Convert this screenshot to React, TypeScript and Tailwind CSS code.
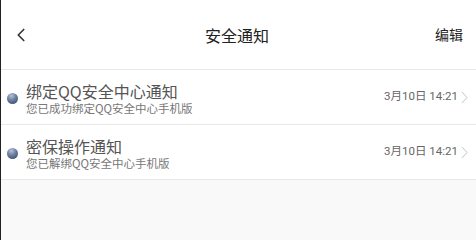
import { ChevronLeft } from "lucide-react";

const FONT = { fontFamily: '"Noto Sans CJK SC", "Noto Sans", Roboto, sans-serif' };

const ITEMS = [
  { title: "绑定QQ安全中心通知", desc: "您已成功绑定QQ安全中心手机版", time: "3月10日 14:21" },
  { title: "密保操作通知", desc: "您已解绑QQ安全中心手机版", time: "3月10日 14:21" },
];

function Arrow() {
  return (
    <svg width="7" height="13" viewBox="0 0 7 13" className="ml-[3px] mr-[8px] shrink-0">
      <polyline points="1,1 6,6.5 1,12" fill="none" stroke="#c4c4c4" strokeWidth="1" />
    </svg>
  );
}

export default function App() {
  return (
    <div className="relative flex h-[240px] w-[476px] flex-col overflow-hidden border-l border-[#222] bg-[#f9f9f9]" style={FONT}>
      {/* Header */}
      <div className="relative flex h-[70px] shrink-0 items-center border-b border-[#e8e8e8] bg-white px-[12px]">
        <ChevronLeft size={22} strokeWidth={1.8} color="#333" className="-ml-[3px]" />
        <div className="flex-1 text-center text-[16px] text-[#222]">安全通知</div>
        <div className="w-[22px]" />
        <div className="absolute right-[13px] text-[14px] text-[#222]">编辑</div>
      </div>

      {/* Rows */}
      {ITEMS.map((it) => (
        <div key={it.title} className="flex h-[55px] shrink-0 items-center border-b border-[#e8e8e8] bg-white">
          <div
            className="ml-[6px] mr-[8px] mt-[2px] h-[11px] w-[11px] shrink-0 rounded-full"
            style={{ background: "radial-gradient(circle at 40% 25%, #b7c3d6 0%, #6f83a3 40%, #2c3e5e 100%)" }}
          />
          <div className="flex min-w-0 flex-1 flex-col pt-[3px]">
            <div className="text-[16px] leading-[20px] text-[#555]">{it.title}</div>
            <div className="text-[11.5px] leading-[15px] text-[#777]">{it.desc}</div>
          </div>
          <div className="text-[11.5px] text-[#666]" style={{ fontFamily: 'Roboto, "Noto Sans CJK SC", sans-serif' }}>{it.time}</div>
          <Arrow />
        </div>
      ))}
    </div>
  );
}
